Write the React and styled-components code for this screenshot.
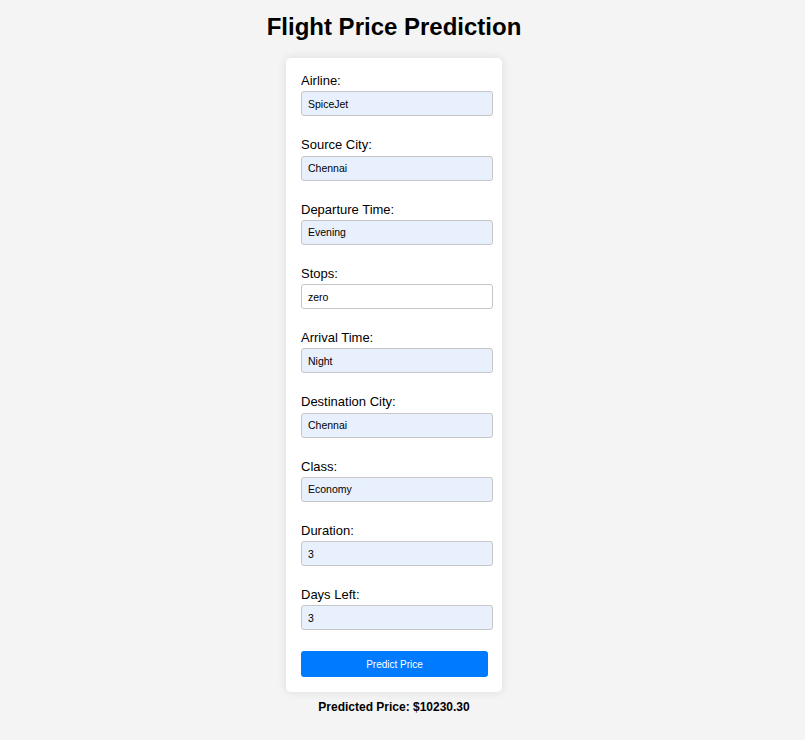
import React from "react";
import styled, { createGlobalStyle } from "styled-components";

const Global = createGlobalStyle`
  html, body { margin: 0; padding: 0; background: #f4f4f4; }
  body { font-family: "Liberation Sans", Arial, sans-serif; color: #000; }
`;

const Page = styled.div`
  width: 788px;
  display: flex;
  flex-direction: column;
  align-items: center;
  padding-top: 13px;
`;

const Title = styled.h1`
  margin: 0 0 17px;
  font-size: 24px;
  line-height: 28px;
  font-weight: bold;
`;

const Card = styled.form`
  width: 186px;
  padding: 15px;
  background: #fff;
  border-radius: 5px;
  box-shadow: 0 0 10px rgba(0, 0, 0, 0.1);
  display: flex;
  flex-direction: column;
`;

const Group = styled.div`
  display: flex;
  flex-direction: column;
  margin-bottom: 21px;
`;

const Label = styled.label`
  font-size: 13px;
  line-height: 16.25px;
  margin-bottom: 2px;
`;

const Input = styled.input`
  box-sizing: border-box;
  width: 192px;
  height: 25px;
  padding: 2px 6px;
  border: 1px solid #c6c6c6;
  border-radius: 3px;
  font-family: "Liberation Sans", Arial, sans-serif;
  font-size: 10.5px;
  color: #000;
  background: ${(p) => (p.$filled ? "#e8f0fe" : "#fff")};
  outline: none;
`;

const Button = styled.button`
  width: 187px;
  height: 26px;
  border: none;
  border-radius: 3px;
  background: #007bff;
  color: #fff;
  font-family: "Liberation Sans", Arial, sans-serif;
  font-size: 10px;
  cursor: pointer;
`;

const Result = styled.div`
  margin-top: 8px;
  font-size: 12px;
  font-weight: bold;
  line-height: 14px;
`;

const fields = [
  ["Airline:", "SpiceJet", true],
  ["Source City:", "Chennai", true],
  ["Departure Time:", "Evening", true],
  ["Stops:", "zero", false],
  ["Arrival Time:", "Night", true],
  ["Destination City:", "Chennai", true],
  ["Class:", "Economy", true],
  ["Duration:", "3", true],
  ["Days Left:", "3", true],
];

export default function App() {
  return (
    <>
      <Global />
      <Page>
        <Title>Flight Price Prediction</Title>
        <Card onSubmit={(e) => e.preventDefault()}>
          {fields.map(([label, value, filled]) => (
            <Group key={label}>
              <Label>{label}</Label>
              <Input defaultValue={value} $filled={filled} />
            </Group>
          ))}
          <Button type="submit">Predict Price</Button>
        </Card>
        <Result>Predicted Price: $10230.30</Result>
      </Page>
    </>
  );
}
